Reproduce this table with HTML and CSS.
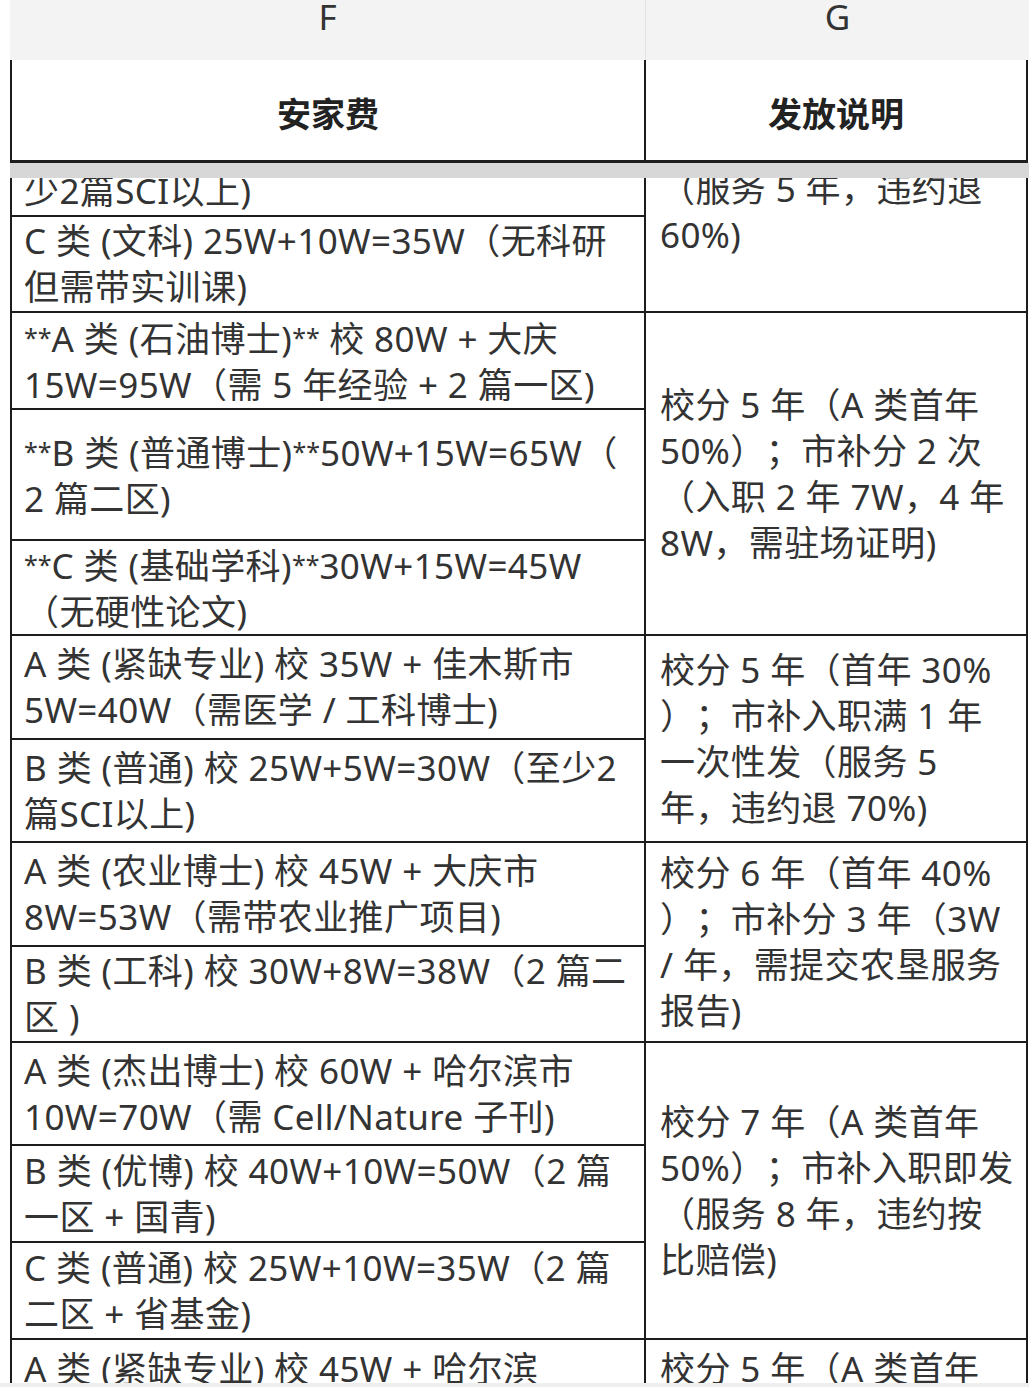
FILE: index.html
```html
<!DOCTYPE html>
<html lang="zh-CN">
<head>
<meta charset="utf-8">
<title>安家费</title>
<link rel="stylesheet" href="styles.css">
</head>
<body>
<div class="sheet">
  <div class="colheads">
    <div class="ch ch-f">F</div>
    <div class="ch">G</div>
  </div>
  <div class="hdr">
    <div class="hc">安家费</div>
    <div class="hc">发放说明</div>
  </div>
  <div class="freeze"></div>
  <div class="viewport">
    <div class="grid">
      <div class="cell c1"><div class="txt">B 类 (普通) 校 25W+10W=35W（至<br>少2篇SCI以上)</div></div>
      <div class="cell c2 s2 tail"><div class="txt">校分 5 年（首年 30%<br>）；市补入职满 1 年<br>（服务 5 年，违约退<br>60%)</div></div>
      <div class="cell c1"><div class="txt">C 类 (文科) 25W+10W=35W（无科研<br>但需带实训课)</div></div>

      <div class="cell c1"><div class="txt"><span class="ast">**</span>A 类 (石油博士)<span class="ast">**</span> 校 80W + 大庆<br>15W=95W（需 5 年经验 + 2 篇一区)</div></div>
      <div class="cell c2 s3"><div class="txt">校分 5 年（A 类首年<br>50%）；市补分 2 次<br>（入职 2 年 7W，4 年<br>8W，需驻场证明)</div></div>
      <div class="cell c1"><div class="txt"><span class="ast">**</span>B 类 (普通博士)<span class="ast">**</span>50W+15W=65W（<br>2 篇二区)</div></div>
      <div class="cell c1"><div class="txt"><span class="ast">**</span>C 类 (基础学科)<span class="ast">**</span>30W+15W=45W<br>（无硬性论文)</div></div>

      <div class="cell c1"><div class="txt">A 类 (紧缺专业) 校 35W + 佳木斯市<br>5W=40W（需医学 / 工科博士)</div></div>
      <div class="cell c2 s2"><div class="txt">校分 5 年（首年 30%<br>）；市补入职满 1 年<br>一次性发（服务 5<br>年，违约退 70%)</div></div>
      <div class="cell c1"><div class="txt">B 类 (普通) 校 25W+5W=30W（至少2<br>篇SCI以上)</div></div>

      <div class="cell c1"><div class="txt">A 类 (农业博士) 校 45W + 大庆市<br>8W=53W（需带农业推广项目)</div></div>
      <div class="cell c2 s2"><div class="txt">校分 6 年（首年 40%<br>）；市补分 3 年（3W<br>/ 年，需提交农垦服务<br>报告)</div></div>
      <div class="cell c1"><div class="txt">B 类 (工科) 校 30W+8W=38W（2 篇二<br>区 )</div></div>

      <div class="cell c1"><div class="txt">A 类 (杰出博士) 校 60W + 哈尔滨市<br>10W=70W（需 Cell/Nature 子刊)</div></div>
      <div class="cell c2 s3"><div class="txt">校分 7 年（A 类首年<br>50%）；市补入职即发<br>（服务 8 年，违约按<br>比赔偿)</div></div>
      <div class="cell c1"><div class="txt">B 类 (优博) 校 40W+10W=50W（2 篇<br>一区 + 国青)</div></div>
      <div class="cell c1"><div class="txt">C 类 (普通) 校 25W+10W=35W（2 篇<br>二区 + 省基金)</div></div>

      <div class="cell c1 top"><div class="txt">A 类 (紧缺专业) 校 45W + 哈尔滨<br>市 5W=50W（需紧缺专业博士)</div></div>
      <div class="cell c2 top"><div class="txt">校分 5 年（A 类首年<br>40%）；市补分 2 次</div></div>
    </div>
  </div>
  <div class="hscroll"></div>
</div>
</body>
</html>
```

FILE: styles.css
```css
html, body {
  margin: 0;
  padding: 0;
  background: #ffffff;
}

body {
  font-family: "Noto Sans", "Noto Sans CJK SC", sans-serif;
  font-size: 35px;
  letter-spacing: 0.4px;
  color: #333333;
  width: 1029px;
  height: 1387px;
  overflow: hidden;
  text-spacing-trim: space-all;
}

.sheet {
  display: flex;
  flex-direction: column;
}

/* column letter bar */
.colheads {
  display: grid;
  grid-template-columns: 636px 383px;
  height: 60px;
  background: #f3f3f3;
  margin-left: 10px;
}

.ch {
  text-align: center;
  line-height: 34px;
  color: #333333;
  font-weight: 400;
  letter-spacing: 0;
}

.ch-f {
  border-right: 1px solid #e2e2e2;
}

/* frozen header row */
.hdr {
  display: grid;
  grid-template-columns: 634px 382px;
  margin-left: 10px;
  width: 1016px;
  border-left: 2px solid #1c1c1c;
  border-bottom: 3px solid #1c1c1c;
  height: 100px;
}

.hc {
  display: flex;
  align-items: center;
  justify-content: center;
  font-size: 34px;
  font-weight: 700;
  letter-spacing: 0;
  color: #222222;
  border-right: 2px solid #1c1c1c;
  padding-top: 4px;
}

.freeze {
  height: 15px;
  margin-left: 10px;
  background: #d7d7d7;
}

.viewport {
  height: 1205px;
  overflow: hidden;
}

.grid {
  display: grid;
  grid-template-columns: 634px 382px;
  grid-template-rows: 97px 96px 97px 131px 95px 104px 103px 104px 96px 103px 97px 97px 100px;
  margin-top: -58px;
  margin-left: 10px;
  width: 1016px;
  border-left: 2px solid #1c1c1c;
}

.cell {
  display: flex;
  align-items: center;
  border-right: 2px solid #1c1c1c;
  border-bottom: 2px solid #1c1c1c;
  overflow: hidden;
}

.txt {
  white-space: nowrap;
  line-height: 46px;
}

.c1 {
  grid-column: 1;
  padding-left: 12px;
}

.c2 {
  grid-column: 2;
  padding-left: 14px;
}

.s2 {
  grid-row: span 2;
}

.s3 {
  grid-row: span 3;
}

.tail {
  align-items: flex-end;
  padding-bottom: 53px;
}

.top {
  align-items: flex-start;
  padding-top: 6px;
}

.ast {
  font-size: 25px;
  letter-spacing: 0;
  vertical-align: 5px;
}

.hscroll {
  height: 4px;
  background: #efefef;
}
```
